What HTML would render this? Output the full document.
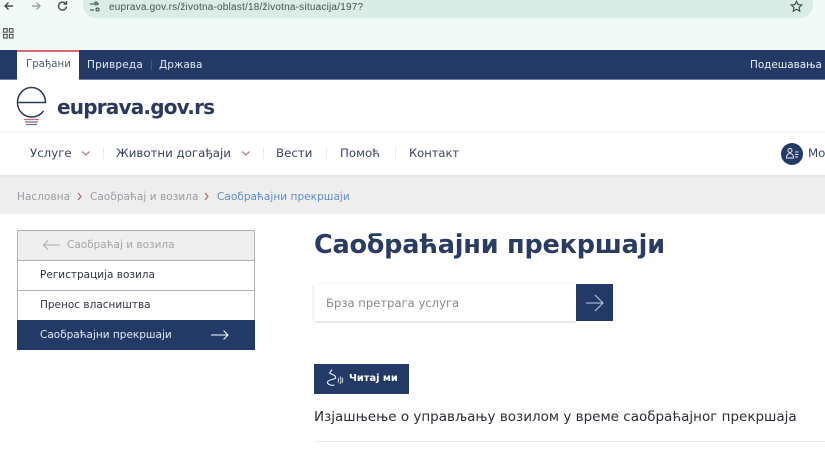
<!DOCTYPE html>
<html lang="sr">
<head>
<meta charset="utf-8">
<title>Саобраћајни прекршаји</title>
<style>
html,body{margin:0;padding:0;width:825px;height:450px;overflow:hidden;background:#fff}
body{position:relative;font-family:"DejaVu Sans","Liberation Sans",sans-serif}
#p{position:absolute;left:0;top:0;width:825px;height:450px;overflow:hidden;filter:blur(.35px)}
.b{position:absolute;display:block}
.t{position:absolute;white-space:nowrap;line-height:1;display:block}
svg{position:absolute;overflow:visible}
</style>
</head>
<body>
<div id="p">
<!-- browser chrome -->
<div class="b" style="left:0;top:0;width:825px;height:50px;background:#f2faf7"></div>
<div class="b" style="left:83px;top:-10px;width:730px;height:28px;background:#d9ece6;border-radius:0 0 13px 13px"></div>
<svg style="left:0;top:0" width="80" height="16" fill="none" stroke-width="1.4">
<path d="M13 6H5M8.500 2.500L5 6l3.500 3.500" stroke="#454b4a"/>
<path d="M32 6h8M36.500 2.500L40 6l-3.500 3.500" stroke="#9aa3a1"/>
<path d="M66.500 6.500a4 4 0 1 1-1.200-3.300M66.500 1v3h-3" stroke="#454b4a"/>
</svg>
<svg style="left:89px;top:1px" width="12" height="12" fill="none" stroke="#3d4544" stroke-width="1.100">
<path d="M1 3h4M1 9h4M8 3h2"/><circle cx="7" cy="2.500" r="1.300"/><circle cx="8.500" cy="8.500" r="1.500"/>
</svg>
<span class="t" style="left:109px;top:2px;font:10px/12px 'Liberation Sans',sans-serif;color:#47524f;letter-spacing:.21px">euprava.gov.rs/životna-oblast/18/životna-situacija/197?</span>
<svg style="left:790px;top:0" width="13" height="13" fill="none" stroke="#3f4645" stroke-width="1.100">
<path d="M6.500 1.200l1.600 3.400 3.700.4-2.800 2.500.8 3.700-3.300-1.900-3.300 1.900.8-3.700L1.200 5l3.700-.4z"/>
</svg>
<svg style="left:3px;top:28px" width="11" height="11" fill="none" stroke="#4a5150" stroke-width="1.100">
<rect x=".6" y=".6" width="3.600" height="3.600"/><rect x="6.400" y=".6" width="3.600" height="3.600"/><rect x=".6" y="6.400" width="3.600" height="3.600"/><rect x="6.400" y="6.400" width="3.600" height="3.600"/>
</svg>

<!-- top bar -->
<div class="b" style="left:0;top:50px;width:825px;height:29px;background:#233a66;border-bottom:1px solid #6f83a6"></div>
<div class="b" style="left:17px;top:50px;width:62px;height:30px;background:#fff;border-top:2px solid #d9686a;box-sizing:border-box"></div>
<span class="t" style="left:26px;top:60px;font-size:10.200px;color:#4f5b72">Грађани</span>
<span class="t" style="left:87px;top:60px;font-size:10.500px;letter-spacing:.2px;color:#e3e9f2">Привреда</span>
<div class="b" style="left:151px;top:60px;width:1px;height:10px;background:#46597f"></div>
<span class="t" style="left:159px;top:60px;font-size:10.500px;color:#e3e9f2">Држава</span>
<span class="t" style="left:750px;top:60px;font-size:10.400px;color:#eef1f6">Подешавања</span>

<!-- logo -->
<svg style="left:16px;top:86px" width="32" height="42" fill="none" stroke="#2c3958">
<path d="M2.500 16.500H29.500C29.500 8 23 1.500 15.500 1.500S1.500 8 1.500 16.500 8 31 15.500 31c5 0 9-2 12-6" stroke-width="1.500"/>
<path d="M8 33.500h15" stroke="#d06a70" stroke-width="1.300"/>
<path d="M9 36h13M10 38.500h11" stroke="#6c7488" stroke-width="1.300"/>
</svg>
<span class="t" style="left:57px;top:97px;font-size:20px;font-weight:700;color:#2b3a5c;letter-spacing:-.8px">euprava.gov.rs</span>

<!-- main nav -->
<div class="b" style="left:0;top:131px;width:825px;height:2px;background:#f6f6f6"></div>
<span class="t" style="left:30px;top:148px;font-size:11.800px;color:#38445c">Услуге</span>
<svg style="left:81px;top:150px" width="10" height="7" fill="none" stroke="#b5808a" stroke-width="1.200"><path d="M1 1.500l3.800 3.500 3.800-3.500"/></svg>
<div class="b" style="left:103px;top:147px;width:1px;height:12px;background:#ececec"></div>
<span class="t" style="left:116px;top:148px;font-size:11.800px;color:#38445c">Животни догађаји</span>
<svg style="left:241px;top:150px" width="10" height="7" fill="none" stroke="#b5808a" stroke-width="1.200"><path d="M1 1.500l3.800 3.500 3.800-3.500"/></svg>
<div class="b" style="left:263px;top:147px;width:1px;height:12px;background:#ececec"></div>
<span class="t" style="left:276px;top:148px;font-size:11.800px;color:#38445c">Вести</span>
<div class="b" style="left:326px;top:147px;width:1px;height:12px;background:#ececec"></div>
<span class="t" style="left:340px;top:148px;font-size:11.800px;color:#38445c">Помоћ</span>
<div class="b" style="left:395px;top:147px;width:1px;height:12px;background:#ececec"></div>
<span class="t" style="left:409px;top:148px;font-size:11.500px;color:#38445c">Контакт</span>
<div class="b" style="left:781px;top:143px;width:22px;height:22px;border-radius:50%;background:#233a66"></div>
<svg style="left:785px;top:147px" width="15" height="14" fill="none" stroke="#e8edf5" stroke-width="1">
<circle cx="5" cy="3.500" r="2"/><path d="M1.500 11c0-3 1.500-4.500 3.500-4.500S8.500 8 8.500 11z"/><path d="M10 5h3.500M10 7.500h3.500M10 10h3"/>
</svg>
<span class="t" style="left:808px;top:148px;font-size:11.800px;color:#38445c">Мо</span>

<!-- breadcrumb -->
<div class="b" style="left:0;top:175px;width:825px;height:39px;background:#eeeeee;border-top:2px solid #e6e6e6;box-sizing:border-box"></div>
<span class="t" style="left:17px;top:192px;font-size:10.500px;letter-spacing:.05px;color:#9a9da3">Насловна</span>
<svg style="left:77px;top:192px" width="6" height="9" fill="none" stroke="#a06a70" stroke-width="1.200"><path d="M1 1l3 3.500L1 8"/></svg>
<span class="t" style="left:90px;top:192px;font-size:10.500px;letter-spacing:.05px;color:#9a9da3">Саобраћај и возила</span>
<svg style="left:204px;top:192px" width="6" height="9" fill="none" stroke="#c0646c" stroke-width="1.200"><path d="M1 1l3 3.500L1 8"/></svg>
<span class="t" style="left:217px;top:192px;font-size:10.500px;letter-spacing:.05px;color:#5b8cc4">Саобраћајни прекршаји</span>

<!-- sidebar -->
<div class="b" style="left:17px;top:230px;width:238px;height:31px;background:#efefef;border:1px solid #aeb0b3;box-sizing:border-box"></div>
<svg style="left:42px;top:239px" width="20" height="12" fill="none" stroke="#a8aaad" stroke-width="1"><path d="M18 6H1.500M6 1.500L1.500 6 6 10.500"/></svg>
<span class="t" style="left:67px;top:240px;font-size:10.500px;color:#a3a5a8">Саобраћај и возила</span>
<div class="b" style="left:17px;top:261px;width:238px;height:30px;background:#fff;border:1px solid #aeb0b3;border-top:0;box-sizing:border-box"></div>
<span class="t" style="left:40px;top:270px;font-size:10.500px;color:#2f3545">Регистрација возила</span>
<div class="b" style="left:17px;top:291px;width:238px;height:29px;background:#fff;border-left:1px solid #aeb0b3;border-right:1px solid #aeb0b3;box-sizing:border-box"></div>
<span class="t" style="left:40px;top:300px;font-size:10.500px;color:#2f3545">Пренос власништва</span>
<div class="b" style="left:17px;top:320px;width:238px;height:30px;background:#233a66"></div>
<span class="t" style="left:40px;top:330px;font-size:10.500px;color:#e3e9f2">Саобраћајни прекршаји</span>
<svg style="left:211px;top:329px" width="19" height="12" fill="none" stroke="#fff" stroke-width="1"><path d="M0 6h17M12.500 1.500L17 6l-4.500 4.500"/></svg>

<!-- content -->
<span class="t" style="left:314px;top:233px;font-size:25.500px;font-weight:700;letter-spacing:-.2px;color:#2b3c63">Саобраћајни прекршаји</span>
<div class="b" style="left:314px;top:284px;width:262px;height:37px;background:#fff;box-shadow:0 1px 3px rgba(0,0,0,.18)"></div>
<span class="t" style="left:326px;top:298px;font-size:11.600px;color:#85888e">Брза претрага услуга</span>
<div class="b" style="left:576px;top:284px;width:37px;height:37px;background:#233a66"></div>
<svg style="left:585px;top:293px" width="20" height="20" fill="none" stroke="#c4cfe0" stroke-width="1"><path d="M1 10h17M10 2l8 8-8 8"/></svg>
<div class="b" style="left:314px;top:364px;width:95px;height:30px;background:#233a66"></div>
<svg style="left:324px;top:368px" width="24" height="22" fill="none" stroke="#e8edf5" stroke-width="1.100">
<path d="M8 1.500L5.500 5l5 2.500c1.500 1 1.500 3-.5 3.500S4 12 3.500 14s3.500 4 7 3"/>
<path d="M14 10c.7 1.300.7 3 0 4.500M16 8.500c1.200 2.200 1.200 5.300 0 7.500M18 9.500c.8 1.800.8 3.800 0 5.500" stroke-width=".9"/>
</svg>
<span class="t" style="left:349px;top:374px;font-size:9.800px;font-weight:700;color:#fff">Читај ми</span>
<span class="t" style="left:314px;top:411px;font-size:13.500px;color:#2b2f36">Изјашњење о управљању возилом у време саобраћајног прекршаја</span>
<div class="b" style="left:314px;top:441px;width:511px;height:1px;background:#ebebeb"></div>
</div>
</body>
</html>
